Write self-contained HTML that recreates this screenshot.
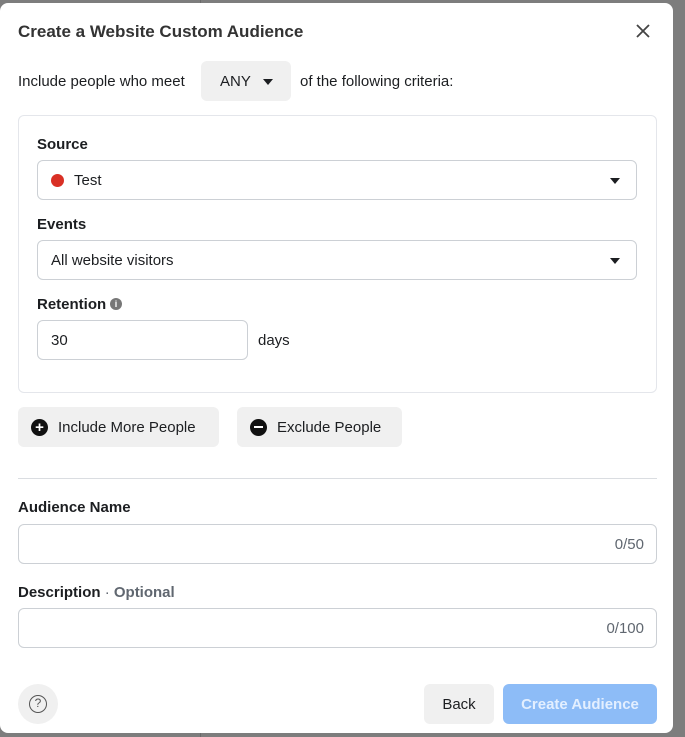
<!DOCTYPE html>
<html><head><style>
*{box-sizing:border-box;margin:0;padding:0}
body{width:685px;height:737px;background:#7d7d7d;font-family:"Liberation Sans",sans-serif;color:#1c1e21;position:relative;overflow:hidden}
.vl{position:absolute;left:200px;top:0;width:1px;height:737px;background:#6a6a6a}
.modal{position:absolute;left:0;top:3px;width:673px;height:730px;background:#fff;border-radius:8px}
.t{position:absolute;font-size:15px;color:#1c1e21}
.b{font-weight:bold}
.box{position:absolute;border:1px solid #ccd0d5;border-radius:6px;background:#fff}
.btn{position:absolute;background:#f0f0f0;border-radius:6px;font-size:15px;display:flex;align-items:center}
.tri{width:0;height:0;border-left:5px solid transparent;border-right:5px solid transparent;border-top:6px solid #1c1e21;position:absolute}
.cnt{position:absolute;right:12px;top:11px;font-size:15px;color:#606770}
</style></head><body>
<div class="vl"></div>
<div class="modal">
<div class="t b" style="left:18px;top:19px;font-size:17px;color:#333">Create a Website Custom Audience</div>
<svg style="position:absolute;left:636px;top:21px" width="14" height="14"><path d="M1 1L13 13M13 1L1 13" stroke="#444" stroke-width="1.8"/></svg>
<div class="t" style="left:18px;top:70px">Include people who meet</div>
<div class="btn" style="left:201px;top:58px;width:90px;height:40px"><span style="margin-left:19px">ANY</span><div class="tri" style="left:62px;top:18px"></div></div>
<div class="t" style="left:300px;top:70px">of the following criteria:</div>
<div class="box" style="left:18px;top:112px;width:639px;height:278px;border-color:#e4e6eb"></div>
<div class="t b" style="left:37px;top:133px">Source</div>
<div class="box" style="left:37px;top:157px;width:600px;height:40px"><div style="position:absolute;left:13px;top:13px;width:13px;height:13px;border-radius:50%;background:#d93025"></div><span class="t" style="left:36px;top:11px">Test</span><div class="tri" style="left:572px;top:17px"></div></div>
<div class="t b" style="left:37px;top:213px">Events</div>
<div class="box" style="left:37px;top:237px;width:600px;height:40px"><span class="t" style="left:13px;top:11px">All website visitors</span><div class="tri" style="left:572px;top:17px"></div></div>
<div class="t b" style="left:37px;top:293px">Retention</div>
<div style="position:absolute;left:110px;top:295px;width:12px;height:12px;border-radius:50%;background:#777;color:#fff;font-size:9px;text-align:center;line-height:12px;font-weight:bold">i</div>
<div class="box" style="left:37px;top:317px;width:211px;height:40px"><span class="t" style="left:13px;top:11px">30</span></div>
<div class="t" style="left:258px;top:329px">days</div>
<div class="btn" style="left:18px;top:404px;width:201px;height:40px"><div style="margin-left:13px;width:17px;height:17px;border-radius:50%;background:#111;color:#fff;text-align:center;line-height:17px;font-weight:bold;font-size:15px">+</div><span style="margin-left:10px">Include More People</span></div>
<div class="btn" style="left:237px;top:404px;width:165px;height:40px"><div style="margin-left:13px;width:17px;height:17px;border-radius:50%;background:#111;position:relative"><div style="position:absolute;left:4px;top:7.5px;width:9px;height:2px;background:#fff"></div></div><span style="margin-left:10px">Exclude People</span></div>
<div style="position:absolute;left:18px;top:475px;width:639px;height:1px;background:#dadde1"></div>
<div class="t b" style="left:18px;top:496px">Audience Name</div>
<div class="box" style="left:18px;top:521px;width:639px;height:40px"><span class="cnt">0/50</span></div>
<div class="t" style="left:18px;top:581px"><b>Description</b> <span style="color:#606770">· <b>Optional</b></span></div>
<div class="box" style="left:18px;top:605px;width:639px;height:40px"><span class="cnt">0/100</span></div>
<div style="position:absolute;left:18px;top:681px;width:40px;height:40px;border-radius:50%;background:#f0f0f0"><div style="position:absolute;left:11px;top:11px;width:18px;height:18px;border:1.5px solid #555;border-radius:50%;font-size:12px;text-align:center;line-height:15px;color:#555">?</div></div>
<div class="btn" style="left:424px;top:681px;width:70px;height:40px;justify-content:center">Back</div>
<div class="btn b" style="left:503px;top:681px;width:154px;height:40px;justify-content:center;background:#8dbcf7;color:#e3efff">Create Audience</div>
</div>
</body></html>
